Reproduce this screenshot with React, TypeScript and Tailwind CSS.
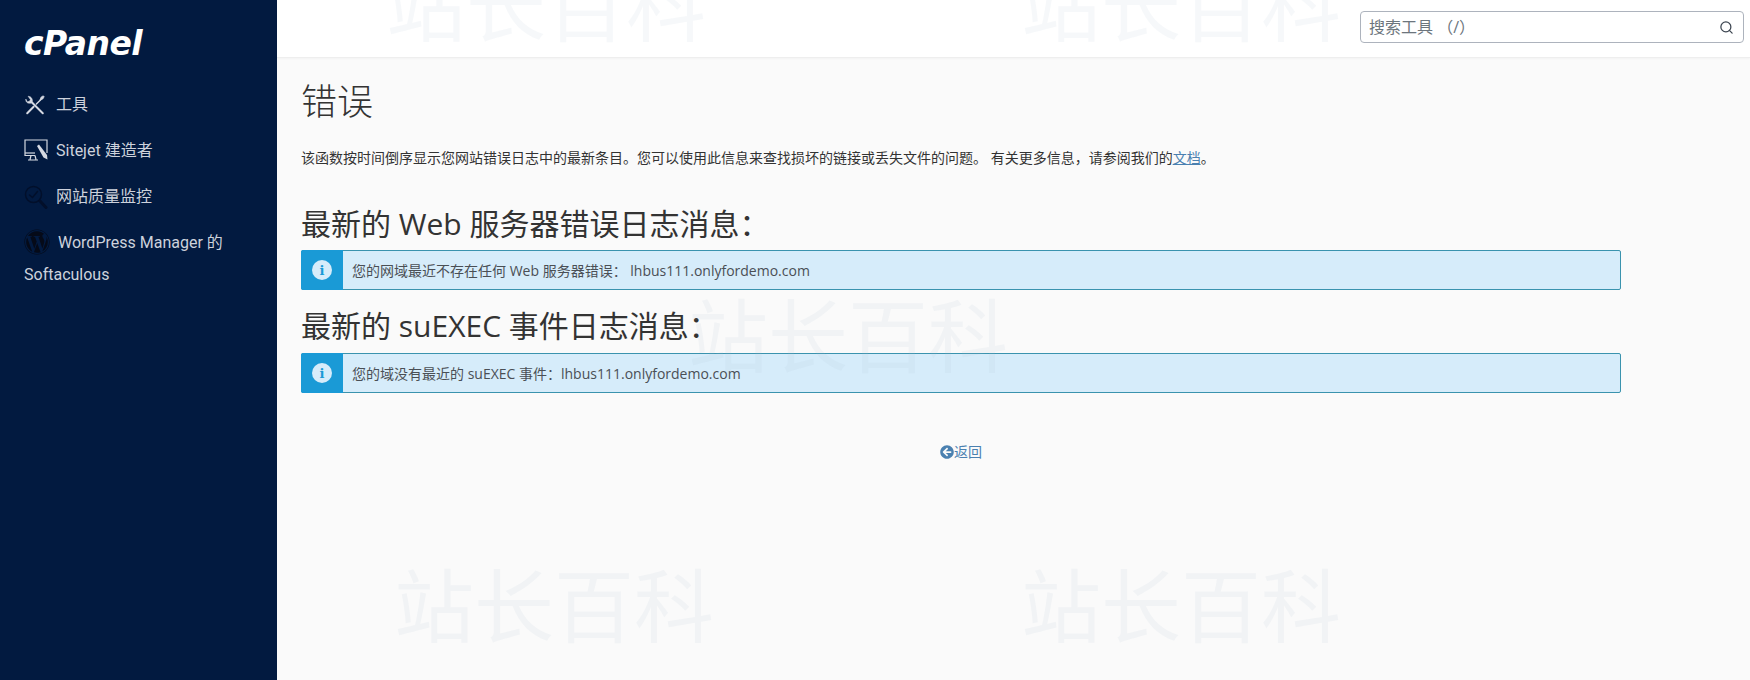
import React from 'react';
import { Search } from 'lucide-react';
import { FaWordpress, FaArrowCircleLeft } from 'react-icons/fa';

const BODY_FONT = "font-['Open_Sans','Noto_Sans_CJK_SC',sans-serif]";

function ToolsIcon() {
    return (
        <svg viewBox="0 0 24 24" className="w-[22px] h-[22px] shrink-0" fill="none" stroke="#d5d9e2" strokeLinecap="round" strokeLinejoin="round">
            {/* screwdriver */}
            <path d="M3.5 21 L10.5 14" strokeWidth="2.2" />
            <path d="M13.5 11 L18.5 6" strokeWidth="1.6" />
            <path d="M17.5 6.5 L18.5 3.5 L21 2 L22 3 L20.5 5.5 L17.5 6.5 Z" fill="#d5d9e2" strokeWidth="0.8" />
            {/* wrench */}
            <path d="M9 9.5 L20.5 21" strokeWidth="2.2" />
            <path d="M9 9.5 C10 6 8 2.5 4.5 2.5 L7 6 L6 8 L3.5 8.5 L2 5.5 C1.5 9 4.5 11.5 9 9.5 Z" fill="#d5d9e2" strokeWidth="0.6" />
        </svg>
    );
}

function SitejetIcon() {
    return (
        <svg viewBox="0 0 24 24" className="w-[24px] h-[24px] shrink-0" fill="none" stroke="#d5d9e2" strokeWidth="1.2">
            <path d="M11 16.5 H1 V1 H23 V14" />
            <path d="M1 14 H11" />
            <path d="M7 16.5 L6 20.5 M11 16.5 L12 20.5 M4 21 H14" />
            <path d="M13 7 L15 5.5 L23 16 L23.5 20.5 L19.5 18.5 Z" fill="#d5d9e2" stroke="none" />
        </svg>
    );
}

function MonitorIcon() {
    return (
        <svg viewBox="0 0 24 24" className="w-[24px] h-[24px] shrink-0" fill="none" stroke="#020f2a" strokeWidth="1.5" strokeLinecap="round">
            <circle cx="9.5" cy="9.5" r="8" />
            <path d="M5.5 10 L8.5 12.5 L13.5 6.5" />
            <path d="M16 16 L22 22.5" strokeWidth="3" />
        </svg>
    );
}

function Alert({ children }: { children: React.ReactNode }) {
    return (
        <div className="flex h-10 border border-[#3a93ae] rounded-[2px] bg-[#d6ecfa]">
            <div className="w-[42px] flex items-center justify-center bg-[#1a9ad6] -my-px -ml-px rounded-l-[2px]">
                <span className="w-5 h-5 rounded-full bg-[#d6ecfa] flex items-center justify-center text-[#1a9ad6] text-[13px] font-bold font-['DejaVu_Serif',serif] leading-none">i</span>
            </div>
            <div className="flex items-center pl-[9px] text-[14px] text-[#4a4f55]">{children}</div>
        </div>
    );
}

function Watermark({ className }: { className: string }) {
    return (
        <div className={`absolute pointer-events-none select-none whitespace-nowrap text-[80px] leading-[80px] font-normal text-[#a9bfd2]/10 font-['Noto_Sans_CJK_SC',sans-serif] ${className}`}>
            站长百科
        </div>
    );
}

export default function App() {
    return (
        <div className={`relative flex h-[680px] w-[1750px] overflow-hidden bg-[#fafafa] ${BODY_FONT}`}>
            <aside className="w-[277px] shrink-0 bg-[#021a40] px-6 pt-[21px] font-['Roboto','Noto_Sans_CJK_SC',sans-serif] text-[16px] text-[#cdd2dc]">
                <div className="h-[44px] flex items-center text-white text-[33px] font-bold italic tracking-[-0.5px] font-['DejaVu_Sans',sans-serif] leading-none">cPanel</div>
                <nav className="mt-[17px]">
                    <div className="flex items-center gap-[10px] h-[46px]">
                        <ToolsIcon />
                        <span>工具</span>
                    </div>
                    <div className="flex items-center gap-[8px] h-[46px]">
                        <SitejetIcon />
                        <span>Sitejet 建造者</span>
                    </div>
                    <div className="flex items-center gap-[8px] h-[46px]">
                        <MonitorIcon />
                        <span>网站质量监控</span>
                    </div>
                    <div className="leading-[32px] pt-[7px]">
                        <FaWordpress className="inline-block align-[-7px] mr-[8px] text-[26px] text-[#050a18]" />
                        WordPress Manager 的 Softaculous
                    </div>
                </nav>
            </aside>

            <div className="flex-1 min-w-0">
                <header className="h-[58px] bg-white border-b border-[#eeeeee] shadow-[0_1px_2px_rgba(0,0,0,0.03)] flex items-start justify-end pt-[11px] pr-[6px]">
                    <div className="w-[384px] h-8 border border-[#adb3bd] rounded-[4px] bg-white flex items-center justify-between pl-2 pr-[9px]">
                        <span className="text-[16px] text-[#6c757d]">搜索工具 （/）</span>
                        <Search size={15} className="text-[#3c4550]" />
                    </div>
                </header>

                <main className="pl-6 w-[1344px]">
                    <h1 className="mt-[21px] text-[36px] leading-[46px] font-light text-[#333333]">错误</h1>
                    <p className="mt-[23px] text-[14px] leading-5 text-[#333333] whitespace-nowrap">
                        该函数按时间倒序显示您网站错误日志中的最新条目。您可以使用此信息来查找损坏的链接或丢失文件的问题。 有关更多信息，请参阅我们的<a className="text-[#4a80b0] underline">文档</a>。
                    </p>
                    <h2 className="mt-[36px] mb-[6px] text-[30px] leading-[40px] text-[#333333]">最新的 Web 服务器错误日志消息：</h2>
                    <Alert>您的网域最近不存在任何 Web 服务器错误： lhbus111.onlyfordemo.com</Alert>
                    <h2 className="mt-[16px] mb-[7px] text-[30px] leading-[40px] text-[#333333]">最新的 suEXEC 事件日志消息：</h2>
                    <Alert>您的域没有最近的 suEXEC 事件：lhbus111.onlyfordemo.com</Alert>
                    <div className="mt-[49px] flex items-center justify-center text-[14px] leading-5 text-[#4a80b0]">
                        <FaArrowCircleLeft className="text-[14px]" />
                        <span>返回</span>
                    </div>
                </main>
            </div>

            <Watermark className="left-[386px] top-[-40px]" />
            <Watermark className="left-[1021px] top-[-40px]" />
            <Watermark className="left-[688px] top-[291px]" />
            <Watermark className="left-[394px] top-[561px]" />
            <Watermark className="left-[1021px] top-[561px]" />
        </div>
    );
}
